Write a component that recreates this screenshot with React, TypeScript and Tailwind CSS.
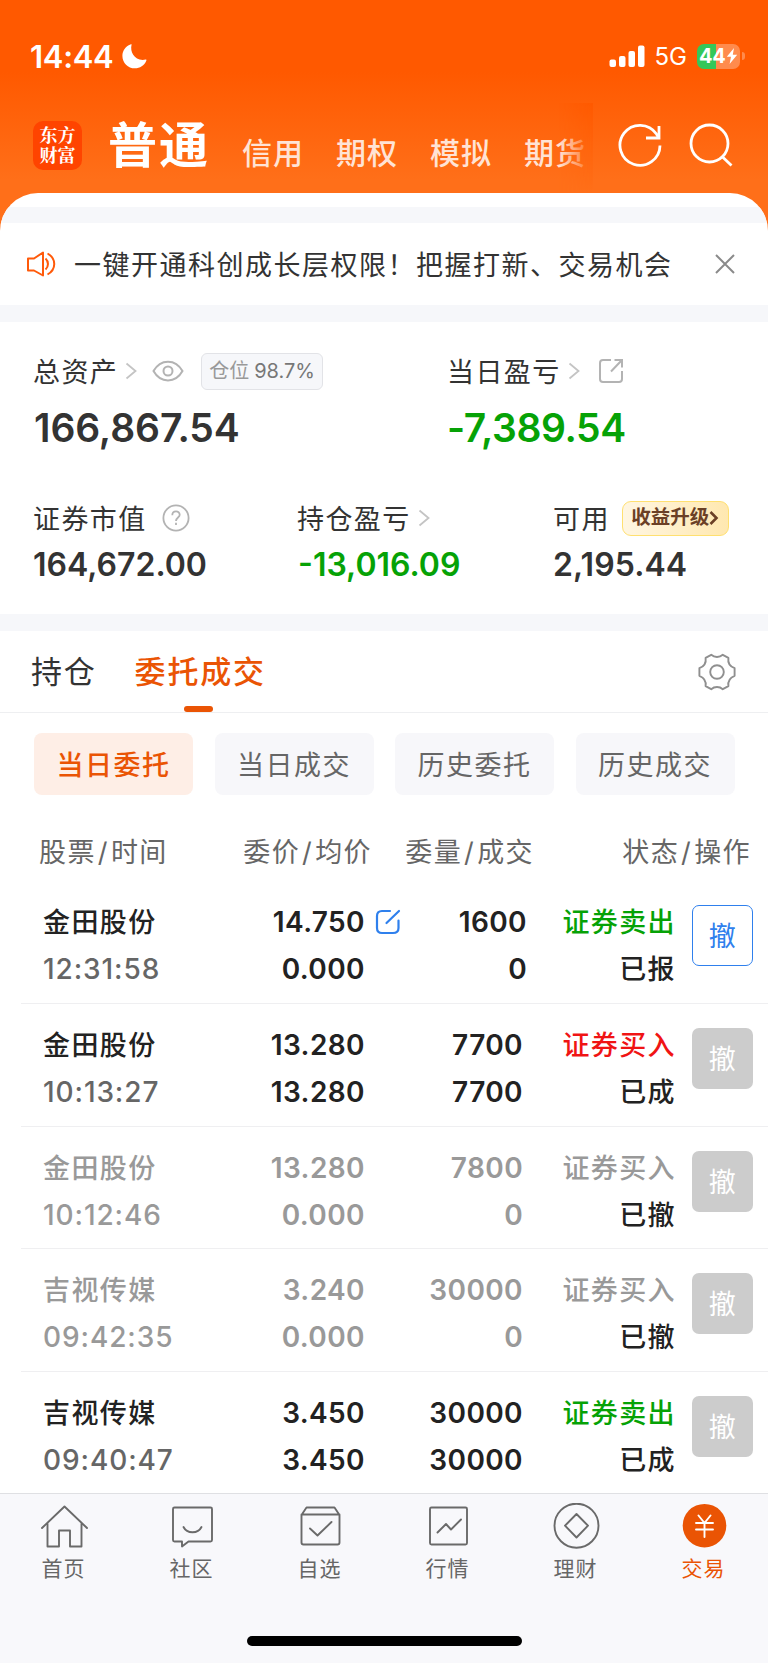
import type { ReactNode } from "react";

interface Order {
    name: string;
    time: string;
    price: string;
    avg: string;
    amount: string;
    done: string;
    side: string;
    sideColor: string;
    status: string;
    kind: "open" | "done" | "cancelled";
}

const green = "text-[#06a206]";
const red = "text-[#f01414]";
const gray = "text-[#999]";

const orders: Order[] = [
    { name: "金田股份", time: "12:31:58", price: "14.750", avg: "0.000", amount: "1600", done: "0", side: "证券卖出", sideColor: green, status: "已报", kind: "open" },
    { name: "金田股份", time: "10:13:27", price: "13.280", avg: "13.280", amount: "7700", done: "7700", side: "证券买入", sideColor: red, status: "已成", kind: "done" },
    { name: "金田股份", time: "10:12:46", price: "13.280", avg: "0.000", amount: "7800", done: "0", side: "证券买入", sideColor: gray, status: "已撤", kind: "cancelled" },
    { name: "吉视传媒", time: "09:42:35", price: "3.240", avg: "0.000", amount: "30000", done: "0", side: "证券买入", sideColor: gray, status: "已撤", kind: "cancelled" },
    { name: "吉视传媒", time: "09:40:47", price: "3.450", avg: "3.450", amount: "30000", done: "30000", side: "证券卖出", sideColor: green, status: "已成", kind: "done" },
];

const accounts = ["信用", "期权", "模拟", "期货"];
const filters = ["当日委托", "当日成交", "历史委托", "历史成交"];

const StatusBar = () => (
    <div className="flex h-[112px] items-center pl-[30px] pr-[23px] text-white">
        <span className="w-[83px] whitespace-nowrap text-[31px] font-semibold leading-none tracking-[-0.300px]">14:44</span>
        <svg className="ml-[9px]" width="25" height="25" viewBox="0 0 25 25" fill="white">
            <path d="M9.6 0.6C7.6 8.5 13 17.6 23.6 15.6C24.3 15.5 24.6 16 24.3 16.7C22.3 21.3 17.9 24.3 12.9 24.3C6 24.3 0.4 18.7 0.4 11.9C0.4 6.900 3.600 2.500 8.400 0.600C9.100 0.300 9.700 0.100 9.600 0.600Z" />
        </svg>
        <svg className="ml-auto" width="36" height="24" viewBox="0 0 36 24" fill="white">
            <rect x="0.500" y="15.500" width="6.500" height="7.500" rx="2" />
            <rect x="10" y="12" width="6.500" height="11" rx="2" />
            <rect x="19.500" y="7" width="6.500" height="16" rx="2" />
            <rect x="29" y="1.500" width="6.500" height="21.500" rx="2" />
        </svg>
        <span className="ml-[10px] pt-[2px] text-[24px] leading-none">5G</span>
        <div className="ml-[10px] flex h-[25px] w-[43px] items-center overflow-hidden rounded-[7px] bg-[linear-gradient(90deg,#34c759_44%,#ff8b4d_44%)] pl-[2px]">
            <span className="text-[20px] font-bold leading-none tracking-[-0.300px]">44</span>
            <svg className="ml-[1px] shrink-0" width="12" height="16" viewBox="0 0 12 16" fill="white">
                <path d="M8 0L0.800 8.800H5L3.600 16L11.200 6.800H6.800Z" />
            </svg>
        </div>
        <div className="ml-[2px] h-[8px] w-[3px] rounded-r-full bg-[#ff8b4d]" />
    </div>
);

const Header = () => (
    <header className="h-[240px] shrink-0 bg-[linear-gradient(180deg,#ff5900_0px,#ff5900_72px,#ff6f19_180px,#ff6f19_240px)]">
        <StatusBar />
        <div className="flex h-[80px] text-white">
            <div className="ml-[33px] mt-[9px] flex h-[49px] w-[49px] shrink-0 flex-wrap content-center justify-center rounded-[10px] bg-[#ff4400] pb-[3px] font-['Noto_Serif_CJK_SC','Noto_Sans_CJK_SC',serif] text-[18px] font-bold leading-[20px]">
                <p className="w-[36px]">东方财富</p>
            </div>
            <h1 className="ml-[26px] mt-[9px] shrink-0 text-[49px] font-bold leading-[50px] tracking-[2px]">普通</h1>
            <div className="relative ml-[32px] flex w-[351px] shrink-0 gap-[32px] text-[30px] leading-[40px] tracking-[1px] text-[#ffe3d5]">
                {accounts.map((a) => (
                    <span key={a} className="mt-[21px] shrink-0 font-medium">{a}</span>
                ))}
                <div className="absolute -top-[9px] right-0 h-[89px] w-[34px] bg-[linear-gradient(180deg,#ff5900,#ff6f19)] [mask-image:linear-gradient(90deg,transparent,black)]" />
            </div>
            <svg className="ml-[24px] mt-[9px] shrink-0" width="48" height="48" viewBox="0 0 48 48" fill="none" stroke="white" strokeWidth="2.800">
                <path d="M43 24.500A20 20 0 1 1 39.500 13L41.500 16.500" />
                <path d="M42 5V17H29" />
            </svg>
            <svg className="ml-[23px] mt-[9px] shrink-0" width="48" height="48" viewBox="0 0 48 48" fill="none" stroke="white" strokeWidth="2.800">
                <circle cx="21.500" cy="22.500" r="18.500" />
                <path d="M34 35.500L43.500 44.500" />
            </svg>
        </div>
    </header>
);

const Notice = () => (
    <div className="flex h-[82px] shrink-0 items-center pl-[26px] pr-[32px]">
        <svg width="30" height="28" viewBox="0 0 30 28" fill="none" stroke="#ff5a0a" strokeWidth="2">
            <path d="M2 8.500H8L17 2.500V25.500L8 20.500H2Z" strokeLinejoin="round" />
            <path d="M19.500 8.500C22.800 11.500 22.800 16.500 19.500 19.500M21.500 3.500C30.500 8.500 30.500 19.500 21.500 24.500" />
        </svg>
        <span className="ml-[18px] pt-[3px] text-[27px] leading-none tracking-[1.500px] whitespace-nowrap">一键开通科创成长层权限！把握打新、交易机会</span>
        <svg className="ml-auto" width="22" height="22" viewBox="0 0 22 22" stroke="#8a8a8a" strokeWidth="2">
            <path d="M2 2L20 20M20 2L2 20" />
        </svg>
    </div>
);

const Arrow = () => (
    <svg className="ml-[6px]" width="14" height="18" viewBox="0 0 14 18" fill="none" stroke="#c4c4c4" strokeWidth="1.800">
        <path d="M2.500 1.500L11.500 9L2.500 16.500" />
    </svg>
);

const Label = ({ text, children }: { text: string; children?: ReactNode }) => (
    <div className="-ml-px flex h-[38px] items-center whitespace-nowrap text-[27px] leading-none tracking-[1.400px]">
        <span className="pt-[2px]">{text}</span>
        {children}
    </div>
);

const Summary = () => (
    <section className="h-[292px] shrink-0 pt-[30px]">
        <div className="flex">
            <div className="w-[448px] pl-[34px]">
                <Label text="总资产">
                    <Arrow />
                    <svg className="ml-[14px]" width="32" height="24" viewBox="0 0 32 24" fill="none" stroke="#b3b3b3" strokeWidth="2">
                        <path d="M1.500 12C8.500 -0.500 23.500 -0.500 30.500 12C23.500 24.500 8.500 24.500 1.500 12Z" />
                        <circle cx="16" cy="12" r="4.500" />
                    </svg>
                    <span className="ml-[17px] flex h-[37px] items-center rounded-[6px] border border-[#e2e3e7] bg-[#f6f7fa] px-[7px] text-[20px] tracking-[0px] text-[#999]">
                        仓位<span className="ml-[5px] text-[#777]">98.7%</span>
                    </span>
                </Label>
                <div className="mt-[18px] text-[39px] font-semibold leading-[40px] tracking-[-0.100px]">166,867.54</div>
            </div>
            <div>
                <Label text="当日盈亏">
                    <Arrow />
                    <svg className="ml-[17px]" width="26" height="26" viewBox="0 0 26 26" fill="none" stroke="#b3b3b3" strokeWidth="2">
                        <path d="M13 2H5Q2 2 2 5V21Q2 24 5 24H21Q24 24 24 21V13" />
                        <path d="M13 13.500L23.500 2.500M16.500 2H24V9.500" />
                    </svg>
                </Label>
                <div className={"-ml-px mt-[18px] text-[39px] font-semibold leading-[40px] tracking-[-0.400px] " + green}>-7,389.54</div>
            </div>
        </div>
        <div className="mt-[51px] flex">
            <div className="w-[264px] pl-[34px]">
                <Label text="证券市值">
                    <svg className="ml-[15px]" width="28" height="28" viewBox="0 0 28 28" fill="none" stroke="#b3b3b3" strokeWidth="1.800">
                        <circle cx="14" cy="14" r="12.600" />
                        <path d="M10.300 11.200C10.300 6.300 17.700 6.300 17.700 10.800C17.700 13.500 14 13.600 14 17M14 18.800V21" />
                    </svg>
                </Label>
                <div className="-ml-px mt-[10px] text-[32px] font-semibold leading-[36px]">164,672.00</div>
            </div>
            <div className="w-[256px] pl-[34px]">
                <Label text="持仓盈亏">
                    <Arrow />
                </Label>
                <div className={"mt-[10px] text-[32px] font-semibold leading-[36px] " + green}>-13,016.09</div>
            </div>
            <div className="pl-[34px]">
                <Label text="可用">
                    <span className="ml-[12px] flex h-[35px] w-[107px] items-center justify-center rounded-[9px] border-[1.500px] border-[#ffe070] bg-gradient-to-r from-[#fff6e2] to-[#ffe8b0] text-[19.500px] font-bold tracking-[0px] text-[#6b4026]">
                        收益升级
                        <svg width="10" height="16" viewBox="0 0 10 16" fill="none" stroke="#6b4026" strokeWidth="2.600">
                            <path d="M1.500 2L7.500 8L1.500 14" />
                        </svg>
                    </span>
                </Label>
                <div className="-ml-px mt-[10px] text-[32px] font-semibold leading-[36px] tracking-[0.100px]">2,195.44</div>
            </div>
        </div>
    </section>
);

const Tabs = () => (
    <div className="flex h-[82px] shrink-0 border-b border-[#eeeff1] pl-[31px] pr-[31px] text-[31px] leading-[82px] tracking-[1.800px]">
        <span>持仓</span>
        <div className="relative ml-[38px] font-medium text-[#ea5404]">
            委托成交
            <div className="absolute bottom-0 left-[49px] h-[6px] w-[29px] rounded-[3px] bg-[#ea5404]" />
        </div>
        <svg className="ml-auto mt-[21px]" width="40" height="40" viewBox="0 0 40 40" fill="none" stroke="#8f8f8f" strokeWidth="1.900" strokeLinejoin="round">
            <path d="M14.200 2.800C17.500 5.700 22.500 5.700 25.800 2.800L31.400 5.800C30.700 10.500 33.300 14.500 37.600 16.200V23.800C33.300 25.500 30.700 29.500 31.400 34.200L25.800 37.200C22.500 34.300 17.500 34.300 14.200 37.200L8.600 34.200C9.300 29.500 6.700 25.500 2.400 23.800V16.200C6.700 14.500 9.300 10.500 8.600 5.800Z" />
            <circle cx="20" cy="20" r="6.800" />
        </svg>
    </div>
);

const Filters = () => (
    <div className="flex shrink-0 gap-[21.500px] pl-[34px] pt-[20px]">
        {filters.map((f, i) => (
            <button
                key={f}
                className={
                    "h-[62px] w-[159px] rounded-[8px] pt-[2px] text-[27px] leading-none tracking-[1.500px] " +
                    (i === 0 ? "bg-[#feeee6] font-medium text-[#ea5404]" : "bg-[#f7f7fa] text-[#666]")
                }
            >
                {f}
            </button>
        ))}
    </div>
);

const HeadCell = ({ a, b, className }: { a: string; b: string; className: string }) => (
    <div className={className}>
        {a}
        <span className="mx-[2px]">/</span>
        {b}
    </div>
);

const EditIcon = () => (
    <svg width="26" height="26" viewBox="0 0 26 26" fill="none" stroke="#2f80ed" strokeWidth="2.200" strokeLinecap="round">
        <path d="M15 2H7Q2 2 2 7V19Q2 24 7 24H18Q23.500 24 23.500 19V11.500" />
        <path d="M11.500 14L24 2" />
    </svg>
);

const OrderRow = ({ order, last }: { order: Order; last: boolean }) => {
    const main = order.kind === "cancelled" ? "text-[#999]" : "text-[#222]";
    const time = order.kind === "cancelled" ? "text-[#999]" : "text-[#666]";
    const open = order.kind === "open";
    return (
        <div className={"ml-[21px] flex h-[122.800px] shrink-0 pt-[18px] text-[28px] leading-[47px] tracking-[0.400px] " + (last ? "" : "border-b border-[#efeff1]")}>
            <div className="w-[150px] pl-[22px] font-medium">
                <div className={"text-[27px] tracking-[1.400px] " + main}>{order.name}</div>
                <div className={"tracking-[0.900px] " + time}>{order.time}</div>
            </div>
            <div className={"w-[194px] text-right font-semibold " + main}>
                <div>{order.price}</div>
                <div>{order.avg}</div>
            </div>
            <div className="w-[38px] pl-[10px] pt-[10px]">{open && <EditIcon />}</div>
            <div className={"text-right font-semibold " + main + (open ? " w-[124px]" : " mr-[4px] w-[120px]")}>
                <div>{order.amount}</div>
                <div>{order.done}</div>
            </div>
            <div className="w-[149px] text-right text-[27px] font-medium tracking-[1.400px]">
                <div className={order.sideColor}>{order.side}</div>
                <div className="text-[#222]">{order.status}</div>
            </div>
            <button
                className={
                    "ml-[16px] mt-[6px] h-[61px] w-[61px] rounded-[7px] pt-[2px] text-[27px] leading-none " +
                    (open ? "border-[1.500px] border-[#2f80ed] text-[#2f80ed]" : "bg-[#ccc] text-white")
                }
            >
                撤
            </button>
        </div>
    );
};

const navItems: { label: string; icon: ReactNode }[] = [
    {
        label: "首页",
        icon: <path d="M2 25L24.500 3.500L47 25M7.500 20.500V43.500H19V27.500H30V43.500H41.500V20.500" />,
    },
    {
        label: "社区",
        icon: (
            <>
                <path d="M6.500 4.500H42.500Q44 4.500 44 6V37Q44 38.500 42.500 38.500H20.500L14 43.500V38.500H6.500Q5 38.500 5 37V6Q5 4.500 6.500 4.500Z" />
                <path d="M15.500 24C19 31 30 31 33.500 24" />
            </>
        ),
    },
    {
        label: "自选",
        icon: (
            <>
                <path d="M5.500 12L10.500 4.500H38.500L43.500 12V39.500Q43.500 41.500 41.500 41.500H7.500Q5.500 41.500 5.500 39.500ZM5.500 11.500H43.500" />
                <path d="M14 25.500L21.500 32.500L35.500 19" />
            </>
        ),
    },
    {
        label: "行情",
        icon: (
            <>
                <rect x="6" y="4.500" width="37" height="37" rx="1.500" />
                <path d="M13.500 29.500L22 21L27 26.500L37 16.500" />
            </>
        ),
    },
    {
        label: "理财",
        icon: (
            <>
                <circle cx="24.500" cy="22.700" r="22" />
                <path d="M24.500 11L36 22.700L24.500 34.500L13 22.700Z" />
            </>
        ),
    },
    {
        label: "交易",
        icon: (
            <>
                <circle cx="24.500" cy="22.700" r="21.800" fill="#ea5404" stroke="none" />
                <path d="M18.500 12.500L24.500 20L30.500 12.500M24.500 20V34M16 20H33M16 26.500H33" stroke="white" />
            </>
        ),
    },
];

const BottomNav = () => (
    <nav className="flex h-[170px] shrink-0 flex-col items-center border-t border-[#dfe0e3] bg-[#f8f8fb]">
        <div className="flex w-full">
            {navItems.map((item, i) => (
                <div key={item.label} className={"flex flex-1 flex-col items-center pt-[9px] " + (i === 5 ? "text-[#ea5404]" : "text-[#666]")}>
                    <svg width="49" height="46" viewBox="0 0 49 46" fill="none" stroke="#6a6a6a" strokeWidth="1.900" strokeLinejoin="round" strokeLinecap="round">
                        {item.icon}
                    </svg>
                    <span className="-ml-px mt-[6px] text-[21px] leading-[28px] tracking-[1px]">{item.label}</span>
                </div>
            ))}
        </div>
        <div className="mt-[53px] h-[10px] w-[275px] rounded-full bg-black" />
    </nav>
);

export default function App() {
    return (
        <div className="flex h-[1663px] w-[768px] flex-col overflow-hidden bg-white font-['Inter','Noto_Sans_CJK_SC',sans-serif] text-[#333]">
            <Header />
            <main className="relative -mt-[47px] flex h-[1300px] shrink-0 flex-col overflow-hidden rounded-t-[38px] bg-white">
                <div className="mt-[14px] h-[16px] shrink-0 bg-[#f6f7fa]" />
                <Notice />
                <div className="h-[17px] shrink-0 bg-[#f6f7fa]" />
                <Summary />
                <div className="h-[17px] shrink-0 bg-[#f6f7fa]" />
                <Tabs />
                <Filters />
                <div className="flex h-[86px] shrink-0 pl-[39px] pt-[39px] text-[27px] leading-[38px] tracking-[1.400px] text-[#666]">
                    <HeadCell className="w-[160px]" a="股票" b="时间" />
                    <HeadCell className="w-[173px] text-right" a="委价" b="均价" />
                    <HeadCell className="w-[162px] text-right" a="委量" b="成交" />
                    <HeadCell className="w-[217px] text-right" a="状态" b="操作" />
                </div>
                {orders.map((o, i) => (
                    <OrderRow key={i} order={o} last={i === orders.length - 1} />
                ))}
            </main>
            <BottomNav />
        </div>
    );
}
